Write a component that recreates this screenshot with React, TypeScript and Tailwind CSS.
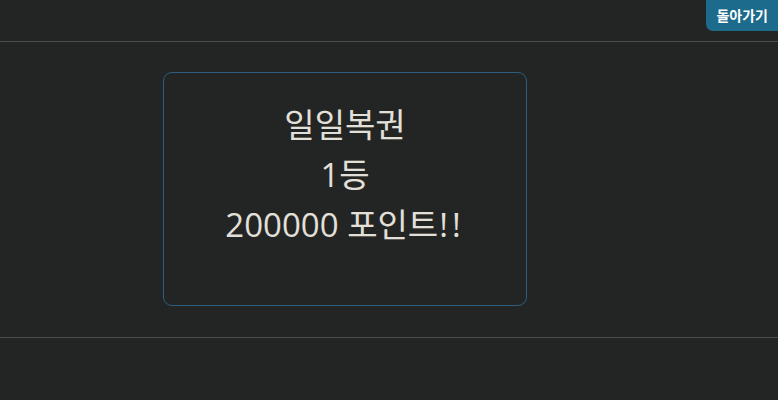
export default function App() {
  return (
    <div
      className="w-[778px] h-[400px] bg-[#232525] text-[#e3e0da] overflow-hidden"
      style={{ fontFamily: '"Open Sans", "Noto Sans CJK KR", sans-serif' }}
    >
      <header className="h-[42px] border-b border-[#4a4c4c] flex justify-end items-start">
        <button className="h-[31px] px-[10px] bg-[#1c6a8c] rounded-bl-[7px] text-white text-[14px] font-bold leading-none">
          돌아가기
        </button>
      </header>
      <main className="h-[296px] border-b border-[#4a4c4c] pt-[30px] pl-[163px]">
        <div className="w-[364px] h-[234px] border border-[#2b5e7e] rounded-[9px] pt-[27px] flex flex-col items-center text-[33px] leading-[50px]">
          <div>일일복권</div>
          <div>1등</div>
          <div>
            200000 포인트<span className="tracking-[4px] ml-[1px]">!!</span>
          </div>
        </div>
      </main>
    </div>
  );
}
